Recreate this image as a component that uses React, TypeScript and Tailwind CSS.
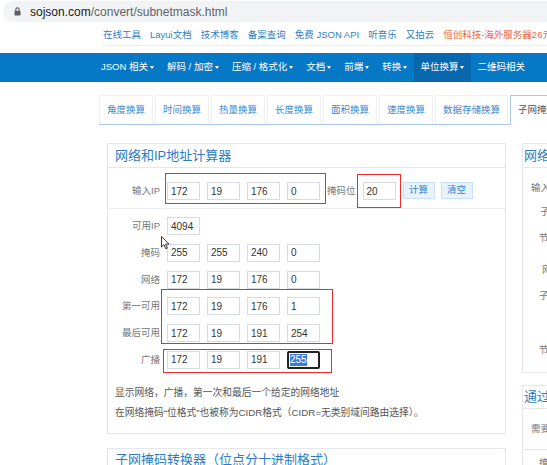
import React from "react";

const navItems = [
  { label: "JSON 相关", active: false },
  { label: "解码 / 加密", active: false },
  { label: "压缩 / 格式化", active: false },
  { label: "文档", active: false },
  { label: "前端", active: false },
  { label: "转换", active: false },
  { label: "单位换算", active: true },
  { label: "二维码相关", active: false },
];

const tabs = ["角度换算", "时间换算", "热量换算", "长度换算", "面积换算", "速度换算", "数据存储换算"];

const topLinks = ["在线工具", "Layui文档", "技术博客", "备案查询", "免费 JSON API", "听音乐", "又拍云"];

const rows: { label: string; values: string[] }[] = [
  { label: "可用IP", values: ["4094"] },
  { label: "掩码", values: ["255", "255", "240", "0"] },
  { label: "网络", values: ["172", "19", "176", "0"] },
  { label: "第一可用", values: ["172", "19", "176", "1"] },
  { label: "最后可用", values: ["172", "19", "191", "254"] },
  { label: "广播", values: ["172", "19", "191", "255"] },
];

function Box({ value, selected }: { value: string; selected?: boolean }) {
  if (selected) {
    return (
      <div className="w-[33px] h-[18px] shrink-0 border-2 border-[#222] rounded-[2px] bg-white flex items-center pl-[1px] text-[10px]">
        <span className="bg-[#3a7be0] text-white leading-[12px]">{value}</span>
      </div>
    );
  }
  return (
    <div className="w-[33px] h-[18px] shrink-0 border border-[#d6dbe2] bg-white flex items-center pl-[3px] text-[10px] text-[#333]">
      {value}
    </div>
  );
}

function Caret() {
  return <span className="inline-block w-0 h-0 ml-[2px] border-x-[2.5px] border-t-[3px] border-x-transparent border-t-white align-middle" />;
}

// red annotation frame drawn over the form
function Mark({ className }: { className: string }) {
  return <div className={`absolute border border-[#ee2b2b] pointer-events-none ${className}`} />;
}

export default function App() {
  return (
    <div className="w-[547px] h-[465px] overflow-hidden bg-white relative font-['Liberation_Sans','Noto_Sans_CJK_SC',sans-serif]">
      {/* address bar */}
      <div className="h-[25px] pt-[1px] pl-[3px]">
        <div className="h-[21px] rounded-l-full bg-[#f1f3f4] flex items-center pl-[11px] whitespace-nowrap">
          <svg width="7" height="9" viewBox="0 0 7 9" className="shrink-0">
            <path d="M1.8 4V2.6a1.7 1.7 0 0 1 3.4 0V4" fill="none" stroke="#5f6368" strokeWidth="1.1" />
            <rect x="0.5" y="3.8" width="6" height="4.8" rx="0.7" fill="#5f6368" />
          </svg>
          <span className="ml-[9px] text-[12px] text-[#202124]">sojson.com</span>
          <span className="text-[12px] text-[#5f6368]">/convert/subnetmask.html</span>
        </div>
      </div>

      {/* top links */}
      <div className="h-[20px] flex items-center pl-[103px] gap-[9px] whitespace-nowrap text-[9.5px] text-[#2f80c3]">
        {topLinks.map((t) => (
          <span key={t}>{t}</span>
        ))}
        <span className="text-[#f0693a]">恒创科技-海外服务器26元起</span>
      </div>
      <div className="ml-[100px] h-px bg-[#f0f1f3]" />

      {/* nav */}
      <div className="mt-[7px] h-[29px] bg-[#0679c6] flex pl-[94.5px] whitespace-nowrap">
        {navItems.map((n) => (
          <div
            key={n.label}
            className={`px-[6.5px] h-full flex items-center text-[9.5px] text-white shrink-0 ${n.active ? "bg-[#0868ad]" : ""}`}
          >
            {n.label}
            {n.label !== "二维码相关" && <Caret />}
          </div>
        ))}
      </div>

      <div className="ml-[99px] w-[700px]">
        {/* tabs */}
        <div className="mt-[13px] h-[30px] flex gap-[2px] border-b border-[#aac8ea] whitespace-nowrap">
          {tabs.map((t) => (
            <div
              key={t}
              className="h-[29px] px-[7px] flex items-center border border-b-0 border-[#eef0f3] text-[9.5px] text-[#3a8ad0] shrink-0"
            >
              {t}
            </div>
          ))}
          <div className="h-[30px] px-[7px] flex items-center border border-b-0 border-[#aac8ea] bg-white text-[9.5px] text-[#555] shrink-0">
            子网掩码计算
          </div>
        </div>

        <div className="flex mt-[18px]">
          {/* main column */}
          <div className="ml-[8px] w-[399px] shrink-0">
            <div className="border border-[#e4e7ec]">
              <div className="h-[24px] border-b border-[#e4e7ec] px-[7px] flex items-center text-[13px] text-[#2b7cc4]">
                网络和IP地址计算器
              </div>

              {/* input row */}
              <div className="relative h-[41px] pt-[14px] border-b border-[#eceef2] flex">
                <div className="w-[52px] h-[18px] shrink-0 text-right text-[9.5px] text-[#777] leading-[18px]">输入IP</div>
                <div className="ml-[7px] flex gap-[7px]">
                  <Box value="172" />
                  <Box value="19" />
                  <Box value="176" />
                  <Box value="0" />
                </div>
                <div className="ml-[7px] h-[18px] text-[9.5px] text-[#777] leading-[18px]">掩码位</div>
                <div className="ml-[7px]">
                  <Box value="20" />
                </div>
                <div className="ml-[7px] w-[32px] h-[17px] border border-[#c8e0f5] bg-[#e7f2fc] text-[#2f86d2] text-[9.5px] flex items-center justify-center">
                  计算
                </div>
                <div className="ml-[6px] w-[32px] h-[17px] border border-[#c8e0f5] bg-[#e7f2fc] text-[#2f86d2] text-[9.5px] flex items-center justify-center">
                  清空
                </div>
                <Mark className="left-[57px] top-[5px] w-[161px] h-[31px]" />
                <Mark className="left-[249px] top-[6px] w-[44px] h-[34px]" />
              </div>

              {/* results */}
              <div className="relative pt-[8px] pb-[10px]">
                <div className="flex flex-col gap-[8.75px]">
                  {rows.map((r, i) => (
                    <div key={r.label} className="flex h-[18px]">
                      <div className="w-[52px] shrink-0 text-right text-[9.5px] text-[#777] leading-[18px]">{r.label}</div>
                      <div className="ml-[7px] flex gap-[7px]">
                        {r.values.map((v, j) => (
                          <Box key={j} value={v} selected={i === 5 && j === 3} />
                        ))}
                      </div>
                    </div>
                  ))}
                </div>
                <div className="mt-[14px] px-[7px] text-[9.75px] text-[#555] leading-[20px]">
                  <p>显示网络，广播，第一次和最后一个给定的网络地址</p>
                  <p>在网络掩码“位格式”也被称为CIDR格式（CIDR=无类别域间路由选择）。</p>
                </div>

                <Mark className="left-[53px] top-[80px] w-[172px] h-[55px]" />
                <Mark className="left-[55px] top-[140px] w-[169px] h-[24px]" />
                {/* mouse pointer */}
                <svg className="absolute left-[53px] top-[27px]" width="9" height="14" viewBox="0 0 9 14">
                  <path d="M0.5 0.5 L0.5 11 L3 8.6 L4.8 12.8 L6.3 12.1 L4.6 8.1 L8 8.1 Z" fill="white" stroke="#222" strokeWidth="0.9" strokeLinejoin="round" />
                </svg>
              </div>
            </div>

            <div className="mt-[14px] border border-[#e4e7ec] h-[40px]">
              <div className="h-[21px] px-[7px] flex items-center text-[13px] text-[#2b7cc4]">
                子网掩码转换器（位点分十进制格式）
              </div>
            </div>
          </div>

          {/* right column */}
          <div className="ml-[16px] w-[200px] shrink-0">
            <div className="border border-[#e4e7ec] h-[230px] whitespace-nowrap">
              <div className="h-[24px] border-b border-[#e4e7ec] pl-[1px] flex items-center text-[13px] text-[#2b7cc4]">
                网络地址计算
              </div>
              <div className="text-[9.5px] text-[#777] leading-[12px]">
                <div className="mt-[14px] pl-[8px]">输入IP</div>
                <div className="mt-[12px] pl-[17px]">子网</div>
                <div className="mt-[14px] pl-[16px]">节点</div>
                <div className="mt-[20px] pl-[19px]">网络</div>
                <div className="mt-[14px] pl-[16px]">子网</div>
                <div className="mt-[42px] pl-[16px]">节点</div>
              </div>
            </div>
            <div className="mt-[12px] border border-[#e4e7ec] h-[100px] whitespace-nowrap">
              <div className="h-[23px] border-b border-[#e4e7ec] pl-[1px] flex items-center text-[13px] text-[#2b7cc4]">
                通过掩码计算
              </div>
              <div className="h-[41px] border-b border-[#e4e7ec] pl-[8px] flex items-center text-[9.5px] text-[#777]">
                需要计算
              </div>
              <div className="mt-[6px] pl-[16px] text-[9.5px] text-[#777]">掩码</div>
            </div>
          </div>
        </div>
      </div>
    </div>
  );
}
